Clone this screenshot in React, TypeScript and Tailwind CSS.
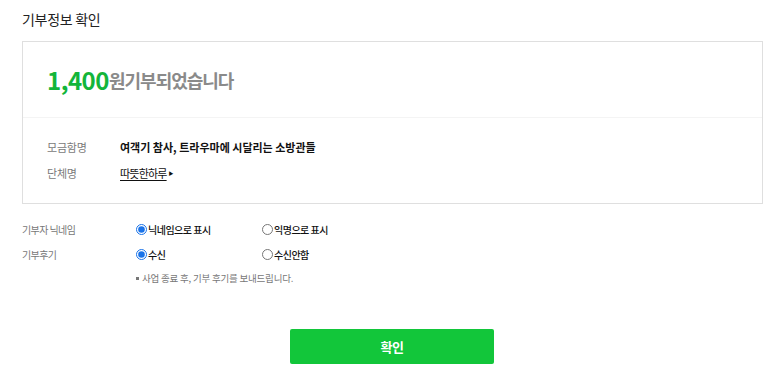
import { useState } from "react";

const FONT = "font-['Noto_Sans_CJK_KR','Noto_Sans',sans-serif]";

function RadioOption( { name, label, checked, onChange }: { name: string; label: string; checked: boolean; onChange: () => void } ) {
    return (
        <label className="flex items-center w-[126px] cursor-pointer">
            <input type="radio" name={name} checked={checked} onChange={onChange}
                className="m-0 w-[11px] h-[11px] accent-[#1a73e8]" />
            <span className="ml-[1px] text-[10px] font-medium tracking-[-0.5px] text-[#111]">{label}</span>
        </label>
    );
}

function App() {

    const [nickname, setNickname] = useState<string>( 'nick' );
    const [review, setReview] = useState<string>( 'yes' );

    return (
        <div className={`${FONT} bg-white w-[773px] h-[380px] pl-[22px] pt-[9px]`}>
            <h3 className="text-[14px] leading-[20px] tracking-[-0.3px] text-[#222]">기부정보 확인</h3>

            <div className="mt-[12px] w-[741px] h-[163px] border border-[#dfdfdf]">
                <div className="h-[76px] border-b border-[#f4f4f4] pl-[24px] flex items-center">
                    <span className="text-[24px] font-bold text-[#13b53a] tracking-[-0.5px]">1,400</span>
                    <span className="mt-[1px] text-[18px] font-bold text-[#8a8a8a] tracking-[-1px]">원기부되었습니다</span>
                </div>
                <div className="pl-[24px] pt-[16px]">
                    <div className="flex items-center h-[26px]">
                        <span className="w-[73px] text-[11px] tracking-[-0.2px] text-[#7a7a7a]">모금함명</span>
                        <span className="text-[11px] font-bold tracking-[0px] text-[#111]">여객기 참사, 트라우마에 시달리는 소방관들</span>
                    </div>
                    <div className="flex items-center h-[26px]">
                        <span className="w-[73px] text-[11px] tracking-[-0.2px] text-[#7a7a7a]">단체명</span>
                        <span className="text-[11px] tracking-[-0.8px] text-[#111] underline underline-offset-2">따뜻한하루</span>
                        <span className="ml-[2px] text-[5px] text-[#111]">▶</span>
                    </div>
                </div>
            </div>

            <div className="mt-[13px]">
                <div className="flex items-center h-[25px]">
                    <span className="w-[114px] text-[10px] tracking-[-0.6px] text-[#777]">기부자 닉네임</span>
                    <RadioOption name="nick" label="닉네임으로 표시" checked={nickname === 'nick'} onChange={() => setNickname( 'nick' )} />
                    <RadioOption name="nick" label="익명으로 표시" checked={nickname === 'anon'} onChange={() => setNickname( 'anon' )} />
                </div>
                <div className="flex items-center h-[25px]">
                    <span className="w-[114px] text-[10px] tracking-[-0.6px] text-[#777]">기부후기</span>
                    <RadioOption name="review" label="수신" checked={review === 'yes'} onChange={() => setReview( 'yes' )} />
                    <RadioOption name="review" label="수신안함" checked={review === 'no'} onChange={() => setReview( 'no' )} />
                </div>
                <div className="ml-[114px] mt-[4px] flex items-center text-[9.5px] tracking-[-0.2px] text-[#777]">
                    <span className="inline-block w-[3px] h-[3px] bg-[#777] mr-[3px]" />
                    <span>사업 종료 후, 기부 후기를 보내드립니다.</span>
                </div>
            </div>

            <div className="mt-[44px] ml-[268px]">
                <button type="button" className="w-[204px] h-[35px] rounded-[2px] bg-[#12c63a] text-white text-[13px] font-bold tracking-[-0.5px]">
                    확인
                </button>
            </div>
        </div>
    );
}

export default App;
